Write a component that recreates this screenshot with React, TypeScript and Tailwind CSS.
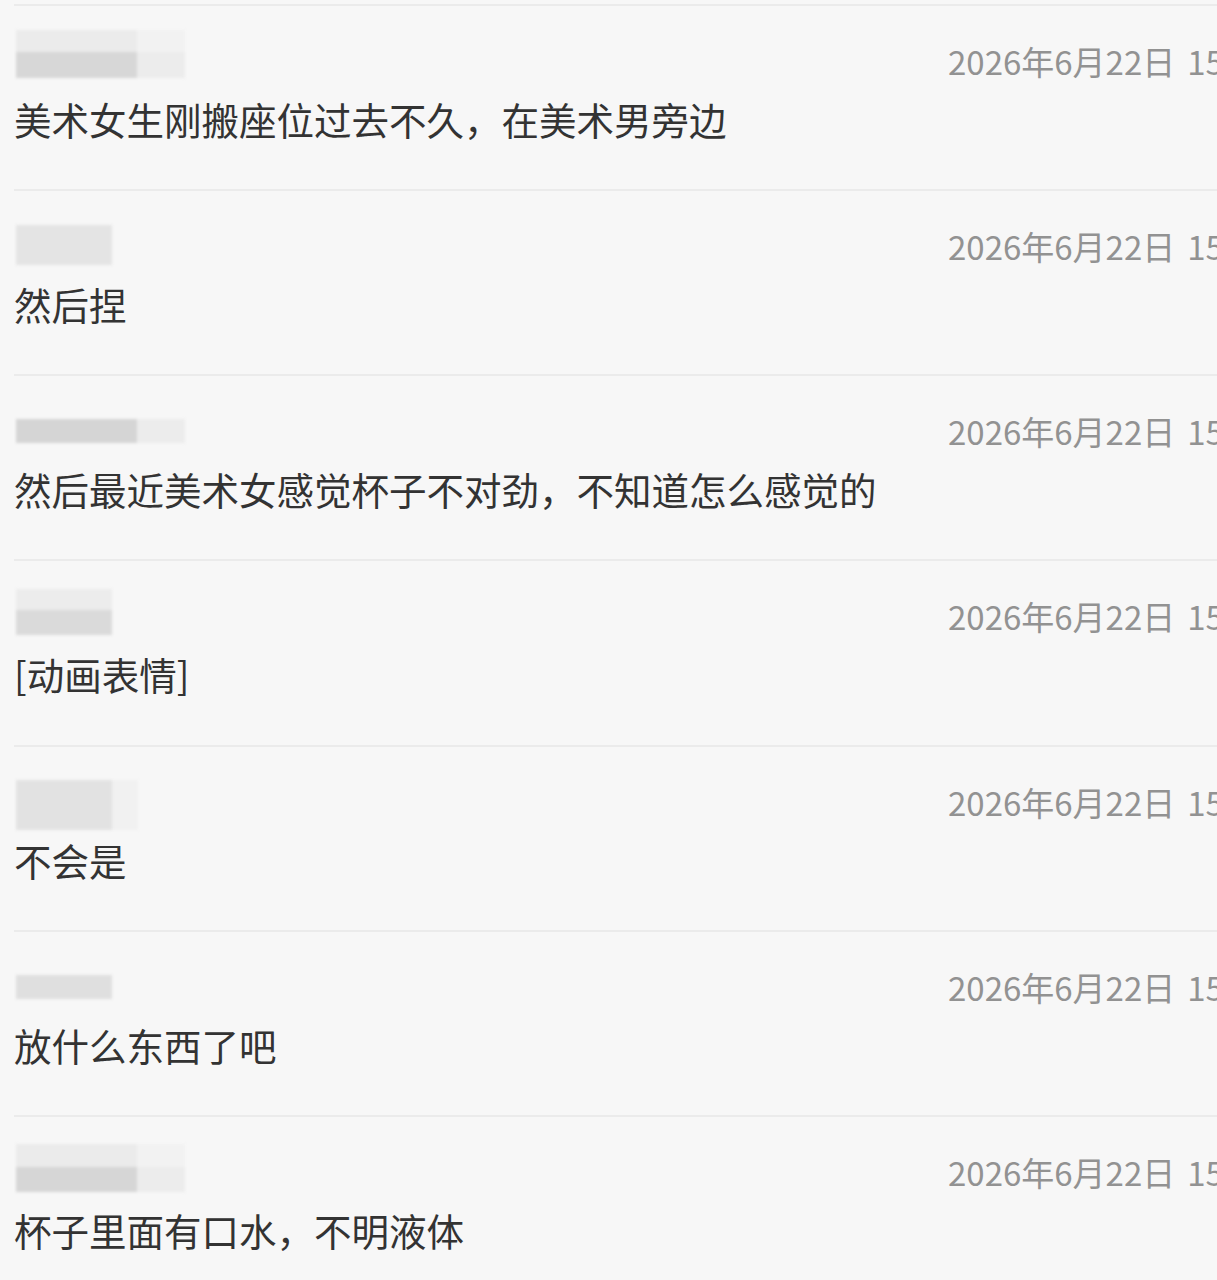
type Band = { h: number; segs: { w: number; c: string }[] };

type Message = {
  nameTop: number;
  name: Band[];
  text: string;
};

// blurred nickname placeholders, one set of bands per sender
const messages: Message[] = [
  {
    nameTop: 24,
    name: [
      { h: 22, segs: [{ w: 121, c: "#ebebeb" }, { w: 48, c: "#f2f2f2" }] },
      { h: 26, segs: [{ w: 121, c: "#d7d7d7" }, { w: 48, c: "#ececec" }] },
    ],
    text: "美术女生刚搬座位过去不久，在美术男旁边",
  },
  {
    nameTop: 34,
    name: [{ h: 40, segs: [{ w: 96, c: "#e4e4e4" }] }],
    text: "然后捏",
  },
  {
    nameTop: 43,
    name: [{ h: 24, segs: [{ w: 121, c: "#d5d5d5" }, { w: 48, c: "#ececec" }] }],
    text: "然后最近美术女感觉杯子不对劲，不知道怎么感觉的",
  },
  {
    nameTop: 28,
    name: [
      { h: 21, segs: [{ w: 96, c: "#ececec" }] },
      { h: 25, segs: [{ w: 96, c: "#dadada" }] },
    ],
    text: "[动画表情]",
  },
  {
    nameTop: 33,
    name: [{ h: 50, segs: [{ w: 96, c: "#e2e2e2" }, { w: 26, c: "#f1f1f1" }] }],
    text: "不会是",
  },
  {
    nameTop: 43,
    name: [{ h: 24, segs: [{ w: 96, c: "#dfdfdf" }] }],
    text: "放什么东西了吧",
  },
  {
    nameTop: 27,
    name: [
      { h: 23, segs: [{ w: 121, c: "#ebebeb" }, { w: 48, c: "#f2f2f2" }] },
      { h: 25, segs: [{ w: 121, c: "#d6d6d6" }, { w: 48, c: "#ececec" }] },
    ],
    text: "杯子里面有口水，不明液体",
  },
];

const font = {
  fontFamily: '"Noto Sans CJK SC", "Noto Sans", sans-serif',
};

function NamePlaceholder({ bands }: { bands: Band[] }) {
  return (
    <div className="ml-[2px] flex flex-col blur-[1.5px]">
      {bands.map((b, i) => (
        <div key={i} className="flex" style={{ height: b.h }}>
          {b.segs.map((s, j) => (
            <div key={j} style={{ width: s.w, background: s.c }} />
          ))}
        </div>
      ))}
    </div>
  );
}

function Row({ m }: { m: Message }) {
  return (
    <div className="flex h-[185.17px] overflow-hidden border-t-2 border-[#ebebeb]">
      <div className="flex w-[934px] shrink-0 flex-col">
        <div className="h-[74px]" style={{ paddingTop: m.nameTop }}>
          <NamePlaceholder bands={m.name} />
        </div>
        <p className="mt-[16px] whitespace-nowrap text-[37.5px] leading-[45px] text-[#333333]">
          {m.text}
        </p>
      </div>
      <div className="mt-[35px] shrink-0 whitespace-nowrap text-[33px] leading-[40px] text-[#929292]">
        2026年6月22日<span className="ml-[12px]">15:32</span>
      </div>
    </div>
  );
}

export default function App() {
  return (
    <div
      className="h-[1280px] w-[1217px] overflow-hidden bg-[#f7f7f7] pt-[4px] pl-[14px]"
      style={font}
    >
      {messages.map((m, i) => (
        <Row key={i} m={m} />
      ))}
    </div>
  );
}
